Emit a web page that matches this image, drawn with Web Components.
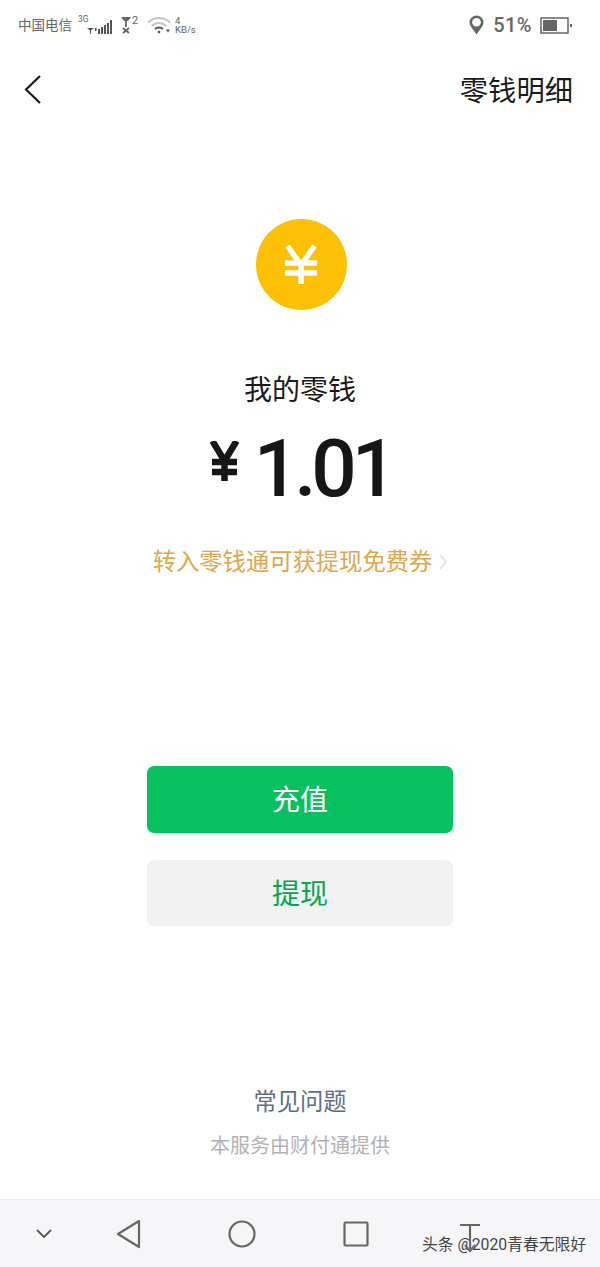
<!DOCTYPE html>
<html lang="zh">
<head>
<meta charset="utf-8">
<title>零钱</title>
<style>
  html, body { margin: 0; padding: 0; background: #fff; }
  body { width: 600px; height: 1267px; overflow: hidden; font-family: Roboto, "Noto Sans CJK SC", sans-serif; }
</style>
</head>
<body>
<wallet-page>
  <status-bar slot="status"></status-bar>
  <title-bar slot="title">零钱明细</title-bar>
  <balance-card slot="balance" label="我的零钱" amount="1.01" promo="转入零钱通可获提现免费券"></balance-card>
  <wallet-button slot="actions" kind="primary">充值</wallet-button>
  <wallet-button slot="actions" kind="secondary">提现</wallet-button>
  <wallet-footer slot="footer"></wallet-footer>
  <nav-bar slot="nav"></nav-bar>
</wallet-page>

<script>
class WalletPage extends HTMLElement {
  constructor () {
    super()
    this.attachShadow({ mode: 'open' }).innerHTML = `
      <style>
        :host { display: flex; flex-direction: column; width: 600px; height: 1267px; }
        .actions { display: flex; flex-direction: column; align-items: center; gap: 27px; margin-top: 187px; }
        .foot { margin-top: auto; }
      </style>
      <slot name="status"></slot>
      <slot name="title"></slot>
      <slot name="balance"></slot>
      <div class="actions"><slot name="actions"></slot></div>
      <div class="foot"><slot name="footer"></slot></div>
      <slot name="nav"></slot>`
  }
}

class StatusBar extends HTMLElement {
  constructor () {
    super()
    this.attachShadow({ mode: 'open' }).innerHTML = `
      <style>
        :host { display: flex; justify-content: space-between; align-items: center; height: 50px; padding: 0 27px 0 18px; color: #666; }
        .side { display: flex; align-items: center; }
        .carrier { font-size: 13.500px; line-height: 16px; margin-right: 6px; }
        .speed { font-size: 9.500px; line-height: 9px; margin-left: 4px; color: #666; }
        .pct { font-size: 20px; font-weight: 500; margin: 0 8px 0 9px; letter-spacing: .4px; }
        svg { display: block; }
      </style>
      <div class="side">
        <span class="carrier">中国电信</span>
        <svg width="36" height="20" viewBox="0 0 36 20" fill="#555">
          <text x="0" y="7" font-size="8.500" font-family="Roboto" fill="#666">3G</text>
          <path d="M9 13h7l-3 2.500v3.500h-1v-3.500z"/>
          <rect x="17" y="13" width="1.500" height="3"/>
          <rect x="20" y="14" width="2" height="5"/>
          <rect x="23" y="12" width="2" height="7"/>
          <rect x="26" y="10" width="2" height="9"/>
          <rect x="29" y="8" width="2" height="11"/>
          <rect x="32" y="5" width="2" height="14"/>
        </svg>
        <svg width="20" height="20" viewBox="0 0 20 20" fill="none" stroke="#666" style="margin-left:7px">
          <path d="M0 2h10L7 6H3z" fill="#666" stroke="none"/>
          <path d="M5 5v7" stroke-width="1.800"/>
          <path d="M2 13l6 5M8 13l-6 5" stroke-width="1.800"/>
          <text x="11" y="9" font-size="11" font-family="Roboto" fill="#666" stroke="none">2</text>
        </svg>
        <svg width="24" height="18" viewBox="0 0 24 18" fill="none" style="margin-left:6px">
          <path d="M1 6.500C7 .5 17 .5 23 6.500" stroke="#c4c4c4" stroke-width="2"/>
          <path d="M4.500 10C9 6 15 6 19.500 10" stroke="#c4c4c4" stroke-width="2"/>
          <path d="M8 13c2.500-1.800 5.500-1.800 8 0" stroke="#555" stroke-width="2"/>
          <circle cx="12" cy="16" r="1.300" fill="#555"/>
          <path d="M19 13.500h4l-2 3z" fill="#555"/>
        </svg>
        <span class="speed">4<br>KB/s</span>
      </div>
      <div class="side">
        <svg width="15" height="20" viewBox="0 0 15 20">
          <path d="M7.500 19.500 2.400 12.300A7 7 0 1 1 12.600 12.300z" fill="#666"/>
          <circle cx="7.500" cy="7.300" r="4.300" fill="#fff"/>
        </svg>
        <span class="pct">51%</span>
        <svg width="33" height="17" viewBox="0 0 33 17" fill="none">
          <rect x="1" y="1" width="27" height="15" stroke="#666" stroke-width="1.500"/>
          <rect x="3" y="3" width="14" height="11" fill="#666"/>
          <rect x="30" y="7" width="2" height="3" fill="#666"/>
        </svg>
      </div>`
  }
}

class TitleBar extends HTMLElement {
  constructor () {
    super()
    this.attachShadow({ mode: 'open' }).innerHTML = `
      <style>
        :host { display: flex; justify-content: space-between; align-items: center; height: 77px; padding: 0 27px 0 24px; color: #1a1a1a; font-size: 28.300px; }
        svg { display: block; }
      </style>
      <svg width="18" height="30" viewBox="0 0 18 30" fill="none" stroke="#1a1a1a" stroke-width="2.200">
        <path d="M16 2 2 15.500 16 29"/>
      </svg>
      <span><slot></slot></span>`
  }
}

class BalanceCard extends HTMLElement {
  constructor () {
    super()
    this.attachShadow({ mode: 'open' }).innerHTML = `
      <style>
        :host { display: flex; flex-direction: column; align-items: center; padding-top: 92px; color: #1a1a1a; }
        .coin { width: 91px; height: 91px; margin-left: 2px; border-radius: 50%; background: #fcc004; display: flex; align-items: center; justify-content: center; }
        .label { font-size: 28px; line-height: 40px; margin-top: 61px; }
        .amount { display: flex; align-items: flex-start; height: 76px; margin-top: 20px; margin-left: 2px; }
        .amount svg { margin: 10px 15px 0 0; }
        .num { font-size: 80px; line-height: 76px; font-weight: 500; letter-spacing: -5px; color: #161616; }
        .promo { display: flex; align-items: center; margin-top: 38px; color: #e2a64c; font-size: 23.300px; line-height: 34px; }
        .promo svg { margin-left: 7px; }
      </style>
      <div class="coin">
        <svg width="34" height="39" viewBox="0 0 34 39" fill="none" stroke="#fff" stroke-width="5.500">
          <path d="M3.500 1 17 20 30.500 1M17 20v19M1 18h32M1 28h32"/>
        </svg>
      </div>
      <div class="label"></div>
      <div class="amount">
        <svg width="29" height="40" viewBox="0 0 29 40" fill="none" stroke="#161616" stroke-width="6.500">
          <path d="M2.500 0 14.500 20 26.500 0M14.500 19v21M2 21h25M2 31h25"/>
        </svg>
        <span class="num"></span>
      </div>
      <div class="promo">
        <span class="text"></span>
        <svg width="8" height="16" viewBox="0 0 8 16" fill="none" stroke="#e3e1de" stroke-width="1.500"><path d="M1 1l6 7-6 7"/></svg>
      </div>`
  }

  connectedCallback () {
    const root = this.shadowRoot
    root.querySelector('.label').textContent = this.getAttribute('label')
    root.querySelector('.num').textContent = this.getAttribute('amount')
    root.querySelector('.text').textContent = this.getAttribute('promo')
  }
}

class WalletButton extends HTMLElement {
  constructor () {
    super()
    this.attachShadow({ mode: 'open' }).innerHTML = `
      <style>
        :host { display: flex; align-items: center; justify-content: center; box-sizing: border-box; width: 306px; height: 67px; padding-bottom: 3px; border-radius: 7px; font-size: 28px; }
        :host([kind="primary"]) { background: #07c160; color: #fff; }
        :host([kind="secondary"]) { background: #f2f2f2; color: #06a552; height: 66px; }
      </style>
      <slot></slot>`
  }
}

class WalletFooter extends HTMLElement {
  constructor () {
    super()
    this.attachShadow({ mode: 'open' }).innerHTML = `
      <style>
        :host { display: flex; flex-direction: column; align-items: center; padding-bottom: 38px; }
        .faq { color: #5f6d84; font-size: 23.300px; line-height: 34px; }
        .by { color: #b2b2b2; font-size: 20px; line-height: 30px; margin-top: 12px; }
      </style>
      <div class="faq">常见问题</div>
      <div class="by">本服务由财付通提供</div>`
  }
}

class NavBar extends HTMLElement {
  constructor () {
    super()
    this.attachShadow({ mode: 'open' }).innerHTML = `
      <style>
        :host { display: flex; align-items: center; position: relative; height: 67px; background: #f6f6f8; border-top: 1px solid #e8e8e8; padding-left: 35px; }
        svg { display: block; flex: none; }
        .mark { position: absolute; left: 422px; top: 36px; font-size: 15.800px; line-height: 18px; color: #444; text-shadow: 0 0 1px #fff; white-space: nowrap; }
      </style>
      <svg width="18" height="14" viewBox="0 0 18 14" fill="none" stroke="#555" stroke-width="1.800"><path d="M2 3l7 7 7-7"/></svg>
      <svg width="26" height="30" viewBox="0 0 26 30" fill="none" stroke="#666" stroke-width="2.200" stroke-linejoin="round" style="margin-left:63px"><path d="M23 2 2 15l21 13z"/></svg>
      <svg width="28" height="30" viewBox="0 0 28 30" fill="none" stroke="#666" stroke-width="2.200" style="margin-left:86px"><circle cx="14" cy="15" r="12.500"/></svg>
      <svg width="26" height="26" viewBox="0 0 26 26" fill="none" stroke="#666" stroke-width="2.200" style="margin-left:87px"><rect x="1.500" y="1.500" width="23" height="23" rx="1"/></svg>
      <svg width="22" height="34" viewBox="0 0 22 34" fill="none" stroke="#666" stroke-width="2.200" style="margin-left:90px;margin-top:10px"><path d="M1 3h20M11 3v26M6 23l5 6 5-6"/></svg>
      <span class="mark">头条 @2020青春无限好</span>`
  }
}

customElements.define('wallet-page', WalletPage)
customElements.define('status-bar', StatusBar)
customElements.define('title-bar', TitleBar)
customElements.define('balance-card', BalanceCard)
customElements.define('wallet-button', WalletButton)
customElements.define('wallet-footer', WalletFooter)
customElements.define('nav-bar', NavBar)
</script>
</body>
</html>
